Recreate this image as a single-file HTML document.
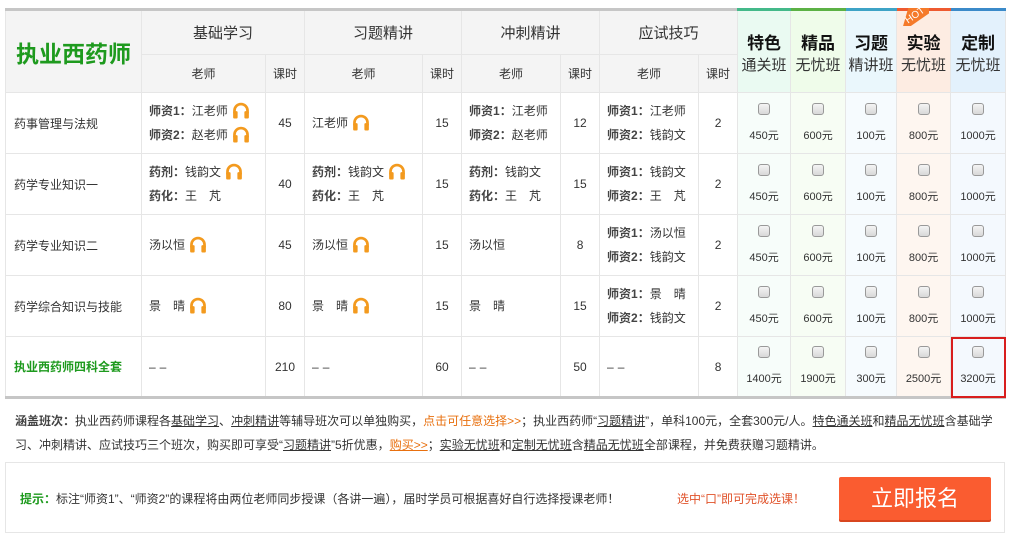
<!DOCTYPE html><html><head><meta charset="utf-8"><style>
*{margin:0;padding:0;box-sizing:border-box}
body{width:1011px;height:545px;background:#fff;font-family:"Liberation Sans","Noto Sans CJK SC",sans-serif;font-size:12px;color:#333;position:relative;overflow:hidden}
table{position:absolute;left:5px;top:8px;border-collapse:collapse;table-layout:fixed;width:1000px;border-top:3px solid #c6c6c6;border-bottom:3px solid #c6c6c6}
td{border:1px solid #e6e6e6;text-align:center;vertical-align:middle;padding:0}
.h1 td{height:45px;background:#f4f4f4;font-size:15px}
.h2 td{height:38px;background:#f4f4f4;font-size:12px}
.r td{height:61px}
.nm{text-align:left;padding-left:8px;font-size:12px}
.t{text-align:left;padding-left:7px;line-height:24px;font-size:12px}
b{color:#444}
.hp{display:inline-block;width:18px;height:18px;vertical-align:-4px;margin-left:4px}
.p{font-size:11px;line-height:16px}
.cb{display:inline-block;width:12px;height:12px;border:1px solid #999;border-radius:3px;background:linear-gradient(#f4f4f4,#d8d8d8);margin-bottom:8px}
.pc1{background:#f7fdfa}.pc2{background:#f7fdf4}.pc3{background:#f6fbfe}.pc4{background:#fef6f0}.pc5{background:#f4f9fe}
.ph{background:#eafaf2!important;font-size:17px;line-height:22px;border-top:3px solid #44b98a!important;padding-top:6px!important}
.ph b{font-size:17px;color:#111;display:block;font-weight:bold}
.ph span{font-size:15px;color:#333}
.notes{position:absolute;left:5px;top:401px;width:1000px;padding:8px 8px 0 10px;font-size:12px;line-height:24px;color:#333}
.notes u{color:#333}
.bot{position:absolute;left:5px;top:462px;width:1000px;height:71px;border:1px solid #e6e6e6}
.d{letter-spacing:4px}
</style></head><body>
<svg width="0" height="0" style="position:absolute"><defs><symbol id="h" viewBox="0 0 16 16"><path d="M2.2 11V8.5a5.8 5.8 0 0 1 11.6 0V11" fill="none" stroke="#f39a1e" stroke-width="2.4"/><rect x="1" y="9" width="4" height="6.5" rx="1" fill="#f39a1e"/><rect x="11" y="9" width="4" height="6.5" rx="1" fill="#f39a1e"/></symbol></defs></svg>
<table>
<colgroup><col style="width:136px"><col style="width:124px"><col style="width:39px"><col style="width:118px"><col style="width:39px"><col style="width:99px"><col style="width:39px"><col style="width:99px"><col style="width:39px"><col style="width:53px"><col style="width:55px"><col style="width:51px"><col style="width:54px"><col style="width:55px"></colgroup>
<tr class="h1"><td rowspan="2" style="color:#1e9a1e;font-size:23px;font-weight:bold">执业西药师</td><td colspan="2">基础学习</td><td colspan="2">习题精讲</td><td colspan="2">冲刺精讲</td><td colspan="2">应试技巧</td>
<td rowspan="2" class="ph"><b>特色</b><span>通关班</span></td>
<td rowspan="2" class="ph" style="background:#effcea!important;border-top-color:#5cb145!important"><b>精品</b><span>无忧班</span></td>
<td rowspan="2" class="ph" style="background:#eaf7fc!important;border-top-color:#3ea3c6!important"><b>习题</b><span>精讲班</span></td>
<td rowspan="2" class="ph" style="background:#fdece2!important;border-top-color:#ee5a30!important;position:relative"><div style="position:absolute;left:6px;top:-3px;width:26px;height:18px;background:#f57a2a;clip-path:polygon(0 100%,20% 0,100% 0,100% 30%,30% 100%)"></div><div style="position:absolute;left:8px;top:-1px;color:#fff;font-size:10px;transform:rotate(-35deg);line-height:12px">HOT</div><b>实验</b><span>无忧班</span></td>
<td rowspan="2" class="ph" style="background:#e3f1fc!important;border-top-color:#3b8ac9!important"><b>定制</b><span>无忧班</span></td></tr>
<tr class="h2"><td>老师</td><td>课时</td><td>老师</td><td>课时</td><td>老师</td><td>课时</td><td>老师</td><td>课时</td></tr>
<tr class="r"><td class="nm">药事管理与法规</td><td class="t"><b>师资1：</b>江老师<svg class="hp"><use href="#h"/></svg><br><b>师资2：</b>赵老师<svg class="hp"><use href="#h"/></svg></td><td>45</td><td class="t">江老师<svg class="hp"><use href="#h"/></svg></td><td>15</td><td class="t"><b>师资1：</b>江老师<br><b>师资2：</b>赵老师</td><td>12</td><td class="t"><b>师资1：</b>江老师<br><b>师资2：</b>钱韵文</td><td>2</td>
<td class="p pc1"><span class="cb"></span><br>450元</td><td class="p pc2"><span class="cb"></span><br>600元</td><td class="p pc3"><span class="cb"></span><br>100元</td><td class="p pc4"><span class="cb"></span><br>800元</td><td class="p pc5"><span class="cb"></span><br>1000元</td></tr>
<tr class="r"><td class="nm">药学专业知识一</td><td class="t"><b>药剂：</b>钱韵文<svg class="hp"><use href="#h"/></svg><br><b>药化：</b>王　芃</td><td>40</td><td class="t"><b>药剂：</b>钱韵文<svg class="hp"><use href="#h"/></svg><br><b>药化：</b>王　芃</td><td>15</td><td class="t"><b>药剂：</b>钱韵文<br><b>药化：</b>王　芃</td><td>15</td><td class="t"><b>师资1：</b>钱韵文<br><b>师资2：</b>王　芃</td><td>2</td>
<td class="p pc1"><span class="cb"></span><br>450元</td><td class="p pc2"><span class="cb"></span><br>600元</td><td class="p pc3"><span class="cb"></span><br>100元</td><td class="p pc4"><span class="cb"></span><br>800元</td><td class="p pc5"><span class="cb"></span><br>1000元</td></tr>
<tr class="r"><td class="nm">药学专业知识二</td><td class="t">汤以恒<svg class="hp"><use href="#h"/></svg></td><td>45</td><td class="t">汤以恒<svg class="hp"><use href="#h"/></svg></td><td>15</td><td class="t">汤以恒</td><td>8</td><td class="t"><b>师资1：</b>汤以恒<br><b>师资2：</b>钱韵文</td><td>2</td>
<td class="p pc1"><span class="cb"></span><br>450元</td><td class="p pc2"><span class="cb"></span><br>600元</td><td class="p pc3"><span class="cb"></span><br>100元</td><td class="p pc4"><span class="cb"></span><br>800元</td><td class="p pc5"><span class="cb"></span><br>1000元</td></tr>
<tr class="r"><td class="nm">药学综合知识与技能</td><td class="t">景　晴<svg class="hp"><use href="#h"/></svg></td><td>80</td><td class="t">景　晴<svg class="hp"><use href="#h"/></svg></td><td>15</td><td class="t">景　晴</td><td>15</td><td class="t"><b>师资1：</b>景　晴<br><b>师资2：</b>钱韵文</td><td>2</td>
<td class="p pc1"><span class="cb"></span><br>450元</td><td class="p pc2"><span class="cb"></span><br>600元</td><td class="p pc3"><span class="cb"></span><br>100元</td><td class="p pc4"><span class="cb"></span><br>800元</td><td class="p pc5"><span class="cb"></span><br>1000元</td></tr>
<tr class="r"><td class="nm" style="color:#1e9a1e;font-weight:bold">执业西药师四科全套</td><td class="t d">––</td><td>210</td><td class="t d">––</td><td>60</td><td class="t d">––</td><td>50</td><td class="t d">––</td><td>8</td>
<td class="p pc1"><span class="cb"></span><br>1400元</td><td class="p pc2"><span class="cb"></span><br>1900元</td><td class="p pc3"><span class="cb"></span><br>300元</td><td class="p pc4"><span class="cb"></span><br>2500元</td><td class="p pc5" style="outline:2px solid #d81e1e;outline-offset:-2px"><span class="cb"></span><br>3200元</td></tr>
</table>
<div class="notes"><b>涵盖班次：</b>执业西药师课程各<u>基础学习</u>、<u>冲刺精讲</u>等辅导班次可以单独购买，<span style="color:#e8700f">点击可任意选择&gt;&gt;</span>；执业西药师“<u>习题精讲</u>”，单科100元，全套300元/人。<u>特色通关班</u>和<u>精品无忧班</u>含基础学习、冲刺精讲、应试技巧三个班次，购买即可享受“<u>习题精讲</u>”5折优惠，<span style="color:#e8700f;text-decoration:underline">购买&gt;&gt;</span>；<u>实验无忧班</u>和<u>定制无忧班</u>含<u>精品无忧班</u>全部课程，并免费获赠习题精讲。</div>
<div class="bot">
<div style="position:absolute;left:14px;top:27px;font-size:12px"><span style="color:#1e9a1e;font-weight:bold">提示：</span>标注“师资1”、“师资2”的课程将由两位老师同步授课（各讲一遍），届时学员可根据喜好自行选择授课老师！</div>
<div style="position:absolute;left:671px;top:27px;font-size:12px;color:#e0522a">选中“口”即可完成选课！</div>
<div style="position:absolute;left:833px;top:14px;width:152px;height:43px;background:#fa5c30;color:#fff;font-size:22px;line-height:43px;text-align:center;border-radius:2px;box-shadow:0 2px 0 #d8461f">立即报名</div>
</div>
</body></html>
